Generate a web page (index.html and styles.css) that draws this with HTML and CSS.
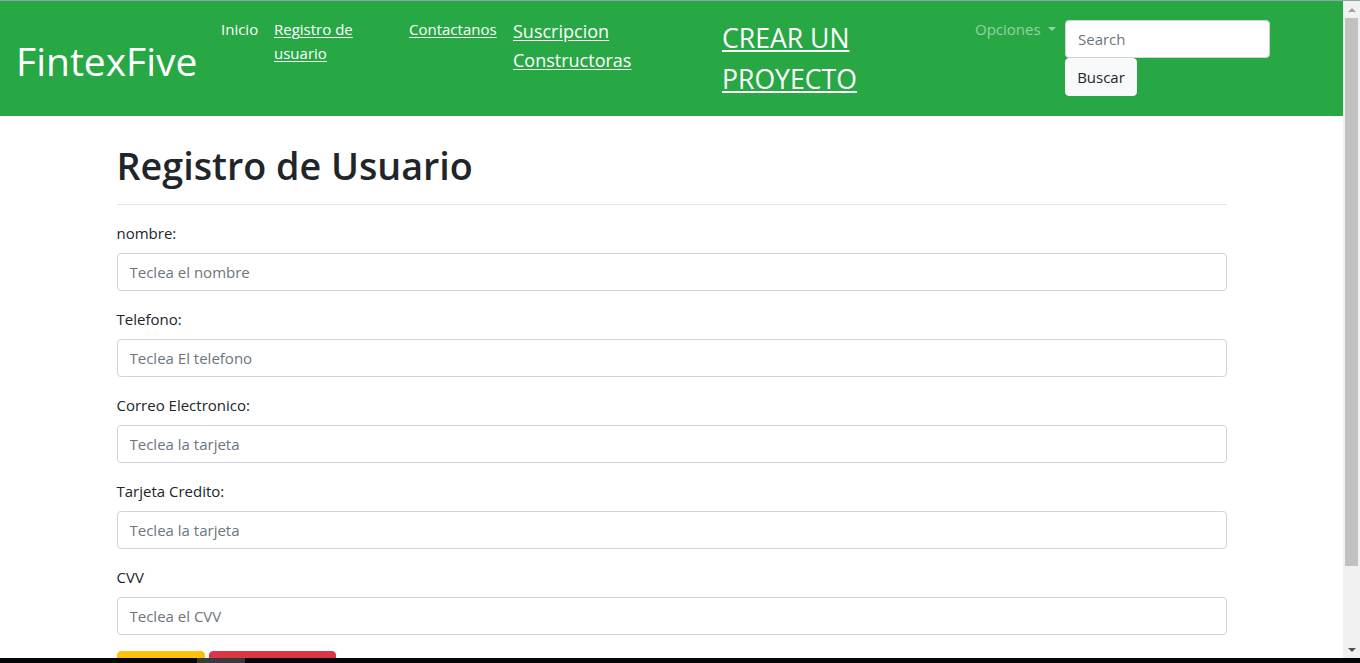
FILE: index.html
```html
<!DOCTYPE html>
<html lang="es">
<head>
<meta charset="utf-8">
<title>Registro de Usuario - FintexFive</title>
<link rel="stylesheet" href="styles.css">
</head>
<body>
<div class="screen">
  <div class="topline"></div>
  <div class="window">
    <div class="page">
      <nav class="navbar">
        <a class="brand" href="#">FintexFive</a>
        <ul class="nav">
          <li class="nav-item w-inicio"><a class="nav-link plain" href="#">Inicio</a></li>
          <li class="nav-item w-registro"><a class="nav-link" href="#">Registro de usuario</a></li>
          <li class="nav-item w-contacto"><a class="nav-link" href="#">Contactanos</a></li>
          <li class="nav-item w-suscripcion"><a class="nav-link medium" href="#">Suscripcion Constructoras</a></li>
          <li class="nav-item w-crear"><a class="nav-link large" href="#">CREAR UN PROYECTO</a></li>
          <li class="nav-item w-opciones"><a class="nav-link plain muted dropdown-toggle" href="#">Opciones</a></li>
        </ul>
        <form class="search">
          <input class="search-input" type="search" placeholder="Search">
          <button class="btn btn-light" type="button">Buscar</button>
        </form>
      </nav>
      <main class="container">
        <div class="page-header">
          <h1 class="title">Registro de Usuario</h1>
        </div>
        <form class="form">
          <div class="form-group">
            <label class="label">nombre:</label>
            <input class="form-control" type="text" placeholder="Teclea el nombre">
          </div>
          <div class="form-group">
            <label class="label">Telefono:</label>
            <input class="form-control" type="text" placeholder="Teclea El telefono">
          </div>
          <div class="form-group">
            <label class="label">Correo Electronico:</label>
            <input class="form-control" type="text" placeholder="Teclea la tarjeta">
          </div>
          <div class="form-group">
            <label class="label">Tarjeta Credito:</label>
            <input class="form-control" type="text" placeholder="Teclea la tarjeta">
          </div>
          <div class="form-group">
            <label class="label">CVV</label>
            <input class="form-control" type="text" placeholder="Teclea el CVV">
          </div>
          <div class="actions">
            <button class="btn btn-warning" type="button" aria-label="Registrar"></button>
            <button class="btn btn-danger" type="button" aria-label="Borrar campos"></button>
          </div>
        </form>
      </main>
    </div>
    <div class="scrollbar">
      <div class="sb-btn"><span class="arrow-up"></span></div>
      <div class="sb-track"><div class="sb-thumb"></div></div>
      <div class="sb-btn"><span class="arrow-down"></span></div>
    </div>
  </div>
  <div class="taskbar"><div class="task-item"></div></div>
</div>
</body>
</html>
```

FILE: styles.css
```css
* { box-sizing: border-box; }

html, body {
  margin: 0;
  padding: 0;
  overflow: hidden;
}

body {
  font-family: "Open Sans", "Noto Sans", sans-serif;
  font-size: 15px;
  line-height: 24px;
  color: #212529;
  background: #fff;
}

.screen {
  width: 1360px;
  height: 663px;
  display: flex;
  flex-direction: column;
}

.topline {
  height: 1px;
  background: #8fa6ae;
  flex: none;
}

.window {
  flex: 1;
  display: flex;
  min-height: 0;
}

.page {
  flex: 1;
  min-width: 0;
  overflow: hidden;
  background: #fff;
}

/* Navbar */
.navbar {
  height: 115px;
  background: #28a745;
  padding: 8px 16px;
  display: flex;
  align-items: center;
}

.brand {
  width: 181px;
  color: #fff;
  text-decoration: none;
  font-size: 39px;
  line-height: 60px;
  margin-right: 16px;
  margin-top: 4px;
  white-space: nowrap;
  flex: none;
}

.nav {
  list-style: none;
  margin: 0;
  padding: 0;
  display: flex;
  align-items: flex-start;
  flex: none;
}

.nav-item { flex: none; }
.w-inicio { width: 53px; }
.w-registro { width: 135px; }
.w-contacto { width: 104px; }
.w-suscripcion { width: 209px; }
.w-crear { width: 253px; }
.w-opciones { width: 98px; }

.nav-link {
  display: block;
  padding: 8px 8px;
  color: #fff;
  text-decoration: underline;
  text-underline-offset: 2px;
}

.nav-link.plain { text-decoration: none; }
.nav-link.muted { color: rgba(255, 255, 255, 0.5); }

.nav-link.medium {
  font-size: 18px;
  line-height: 29px;
  padding-right: 90px;
}

.nav-link.large {
  font-size: 26.6px;
  line-height: 41px;
  padding-top: 9px;
  padding-right: 100px;
}

.w-registro .nav-link { padding-right: 40px; }

.dropdown-toggle::after {
  content: "";
  display: inline-block;
  margin-left: 7px;
  vertical-align: 4px;
  border-top: 4.5px solid;
  border-right: 4.5px solid transparent;
  border-left: 4.5px solid transparent;
}

.search {
  width: 262px;
  display: flex;
  flex-wrap: wrap;
  align-items: flex-start;
  align-self: flex-start;
  margin-top: 11px;
  flex: none;
}

.search-input {
  width: 205px;
  height: 38px;
  padding: 6px 12px;
  font: inherit;
  font-size: 15px;
  color: #495057;
  background: #fff;
  border: 1px solid #ced4da;
  border-radius: 4px;
  outline: none;
}

.search-input::placeholder { color: #6c757d; }

.btn {
  display: inline-block;
  height: 38px;
  padding: 6px 12px;
  font: inherit;
  font-size: 15px;
  line-height: 24px;
  border: 1px solid transparent;
  border-radius: 4px;
  cursor: pointer;
}

.btn-light {
  width: 72px;
  padding: 6px 0;
  background: #f8f9fa;
  border-color: #f8f9fa;
  color: #212529;
  text-align: center;
}

/* Main */
.container {
  width: 1140px;
  margin: 0 auto;
  padding: 0 15px;
}

.page-header {
  margin-top: 26px;
  padding-bottom: 14px;
  border-bottom: 1px solid rgba(0, 0, 0, 0.1);
}

.title {
  margin: 0;
  font-size: 37.7px;
  line-height: 48px;
  font-weight: 600;
  color: #212529;
}

.form { margin-top: 16px; }

.form-group { margin-bottom: 16px; }

.label {
  display: inline-block;
  margin-bottom: 8px;
}

.form-control {
  display: block;
  width: 100%;
  height: 38px;
  padding: 6px 12px;
  font: inherit;
  font-size: 15px;
  color: #495057;
  background: #fff;
  border: 1px solid #ced4da;
  border-radius: 4px;
  outline: none;
}

.form-control::placeholder { color: #6c757d; }

.actions {
  display: flex;
  gap: 4px;
}

.btn-warning {
  width: 88px;
  background: #ffc107;
  border-color: #ffc107;
  color: #212529;
}

.btn-danger {
  width: 127px;
  background: #dc3545;
  border-color: #dc3545;
  color: #fff;
}

/* Fake browser scrollbar */
.scrollbar {
  width: 17px;
  flex: none;
  background: #f1f1f1;
  display: flex;
  flex-direction: column;
}

.sb-btn {
  height: 17px;
  flex: none;
  display: flex;
  align-items: center;
  justify-content: center;
}

.arrow-up {
  width: 0;
  height: 0;
  border-left: 4px solid transparent;
  border-right: 4px solid transparent;
  border-bottom: 4px solid #a3a3a3;
}

.arrow-down {
  width: 0;
  height: 0;
  border-left: 4px solid transparent;
  border-right: 4px solid transparent;
  border-top: 4px solid #505050;
}

.sb-track {
  flex: 1;
  padding: 0 2px;
}

.sb-thumb {
  height: 548px;
  background: #c1c1c1;
}

/* Bottom dark strip */
.taskbar {
  height: 5px;
  flex: none;
  background: #050608;
  padding-left: 197px;
}

.task-item {
  width: 48px;
  height: 100%;
  background: #38383d;
}
```
